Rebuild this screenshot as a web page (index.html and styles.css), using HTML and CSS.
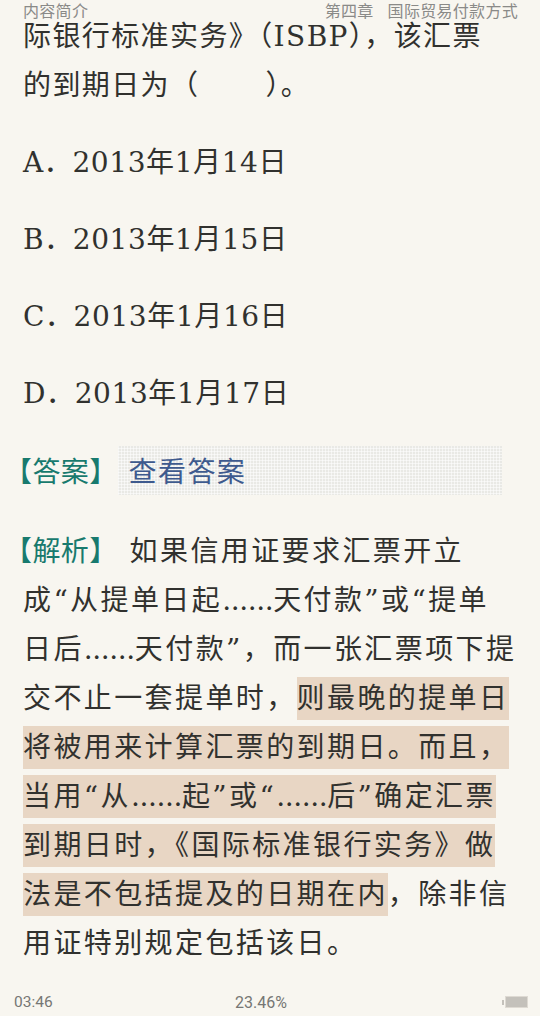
FILE: index.html
```html
<!DOCTYPE html>
<html lang="zh-CN">
<head>
<meta charset="utf-8">
<title>第四章 国际贸易付款方式</title>
<link rel="stylesheet" href="styles.css">
</head>
<body>
<div class="topbar">
  <span>内容简介</span>
  <span class="chapter"><span>第四章</span><span>国际贸易付款方式</span></span>
</div>
<main class="page">
  <p class="question">际银行标准实务》（ISBP），该汇票<br>的到期日为（<span class="blank"></span>）。</p>
  <p class="option">A．2013年1月14日</p>
  <p class="option">B．2013年1月15日</p>
  <p class="option">C．2013年1月16日</p>
  <p class="option">D．2013年1月17日</p>
  <div class="answer">
    <span class="label">【答案】</span>
    <span class="reveal">查看答案</span>
  </div>
  <p class="analysis"><span class="label">【解析】</span><span class="lead">如果信用证要求汇票开立</span><br>成“从提单日起<span class="dots">......</span>天付款”或“提单<br>日后<span class="dots">......</span>天付款”，而一张汇票项下提<br>交不止一套提单时，<span class="hl">则最晚的提单日<br>将被用来计算汇票的到期日。而且，<br>当用“从<span class="dots">......</span>起”或“<span class="dots">......</span>后”确定汇票<br>到期日时，《国际标准银行实务》做<br>法是不包括提及的日期在内</span>，除非信<br>用证特别规定包括该日。</p>
</main>
<footer class="status">
  <span class="time">03:46</span>
  <span class="progress">23.46%</span>
  <span class="battery"><span class="nub"></span><span class="body"></span></span>
</footer>
</body>
</html>
```

FILE: styles.css
```css
html, body {
  margin: 0;
  padding: 0;
}
body {
  width: 540px;
  height: 1016px;
  background: #f8f6f0;
  position: relative;
  overflow: hidden;
  font-family: "DejaVu Serif", "Noto Sans CJK SC", serif;
  color: #31312e;
}
.topbar {
  position: absolute;
  top: 0;
  left: 0;
  right: 0;
  display: flex;
  justify-content: space-between;
  padding: 2px 22px 0 23px;
  font-family: "Noto Sans CJK SC", sans-serif;
  font-size: 16px;
  line-height: 17px;
  letter-spacing: 0.3px;
  color: #8a8a88;
}
.chapter {
  display: flex;
  gap: 14px;
}
.page {
  padding: 12px 23px 0 23px;
  font-size: 28px;
  line-height: 49px;
  letter-spacing: 1.4px;
}
.page p {
  margin: 0;
}
.question .blank {
  display: inline-block;
  width: 66px;
}
.option {
  margin-top: 28px !important;
  letter-spacing: 0.6px;
}
.answer {
  display: flex;
  align-items: center;
  margin-top: 28px;
  height: 49px;
}
.label {
  color: #187a6e;
  font-family: "Noto Sans CJK SC", sans-serif;
  white-space: nowrap;
}
.answer .label {
  flex: 0 0 auto;
  margin-left: -19px;
  letter-spacing: 0.4px;
}
.reveal {
  flex: 0 0 384px;
  height: 49px;
  box-sizing: border-box;
  padding-left: 11px;
  color: #3e5a8e;
  font-family: "Noto Sans CJK SC", sans-serif;
  line-height: 49px;
  background-color: #e9e9e5;
  background-image:
    linear-gradient(90deg, rgba(255,255,255,0.55) 1px, transparent 1px),
    linear-gradient(0deg, rgba(255,255,255,0.55) 1px, transparent 1px);
  background-size: 3px 3px;
}
.analysis {
  margin-top: 30px !important;
  letter-spacing: 2.4px;
}
.analysis .label {
  margin-left: -19px;
  letter-spacing: 0.4px;
}
.lead {
  margin-left: 12px;
}
.dots {
  letter-spacing: -0.4px;
}
.hl {
  background: #e8d6c4;
  padding: 5px 0;
  -webkit-box-decoration-break: clone;
  box-decoration-break: clone;
}
.status {
  position: absolute;
  left: 0;
  right: 0;
  bottom: 0;
  height: 28px;
  display: grid;
  grid-template-columns: 1fr auto 1fr;
  align-items: center;
  padding: 0 12px 0 14px;
  font-family: "Roboto", "Noto Sans", sans-serif;
  font-size: 15.5px;
  color: #767674;
}
.progress {
  font-size: 16px;
  margin-right: 20px;
}
.battery {
  display: flex;
  align-items: center;
  justify-content: flex-end;
}
.battery .nub {
  width: 2px;
  height: 5px;
  background: #c4c1bb;
}
.battery .body {
  width: 21px;
  height: 10px;
  margin-left: 1px;
  background: #c4c1bb;
  border: 1px solid #dedad3;
}
```
